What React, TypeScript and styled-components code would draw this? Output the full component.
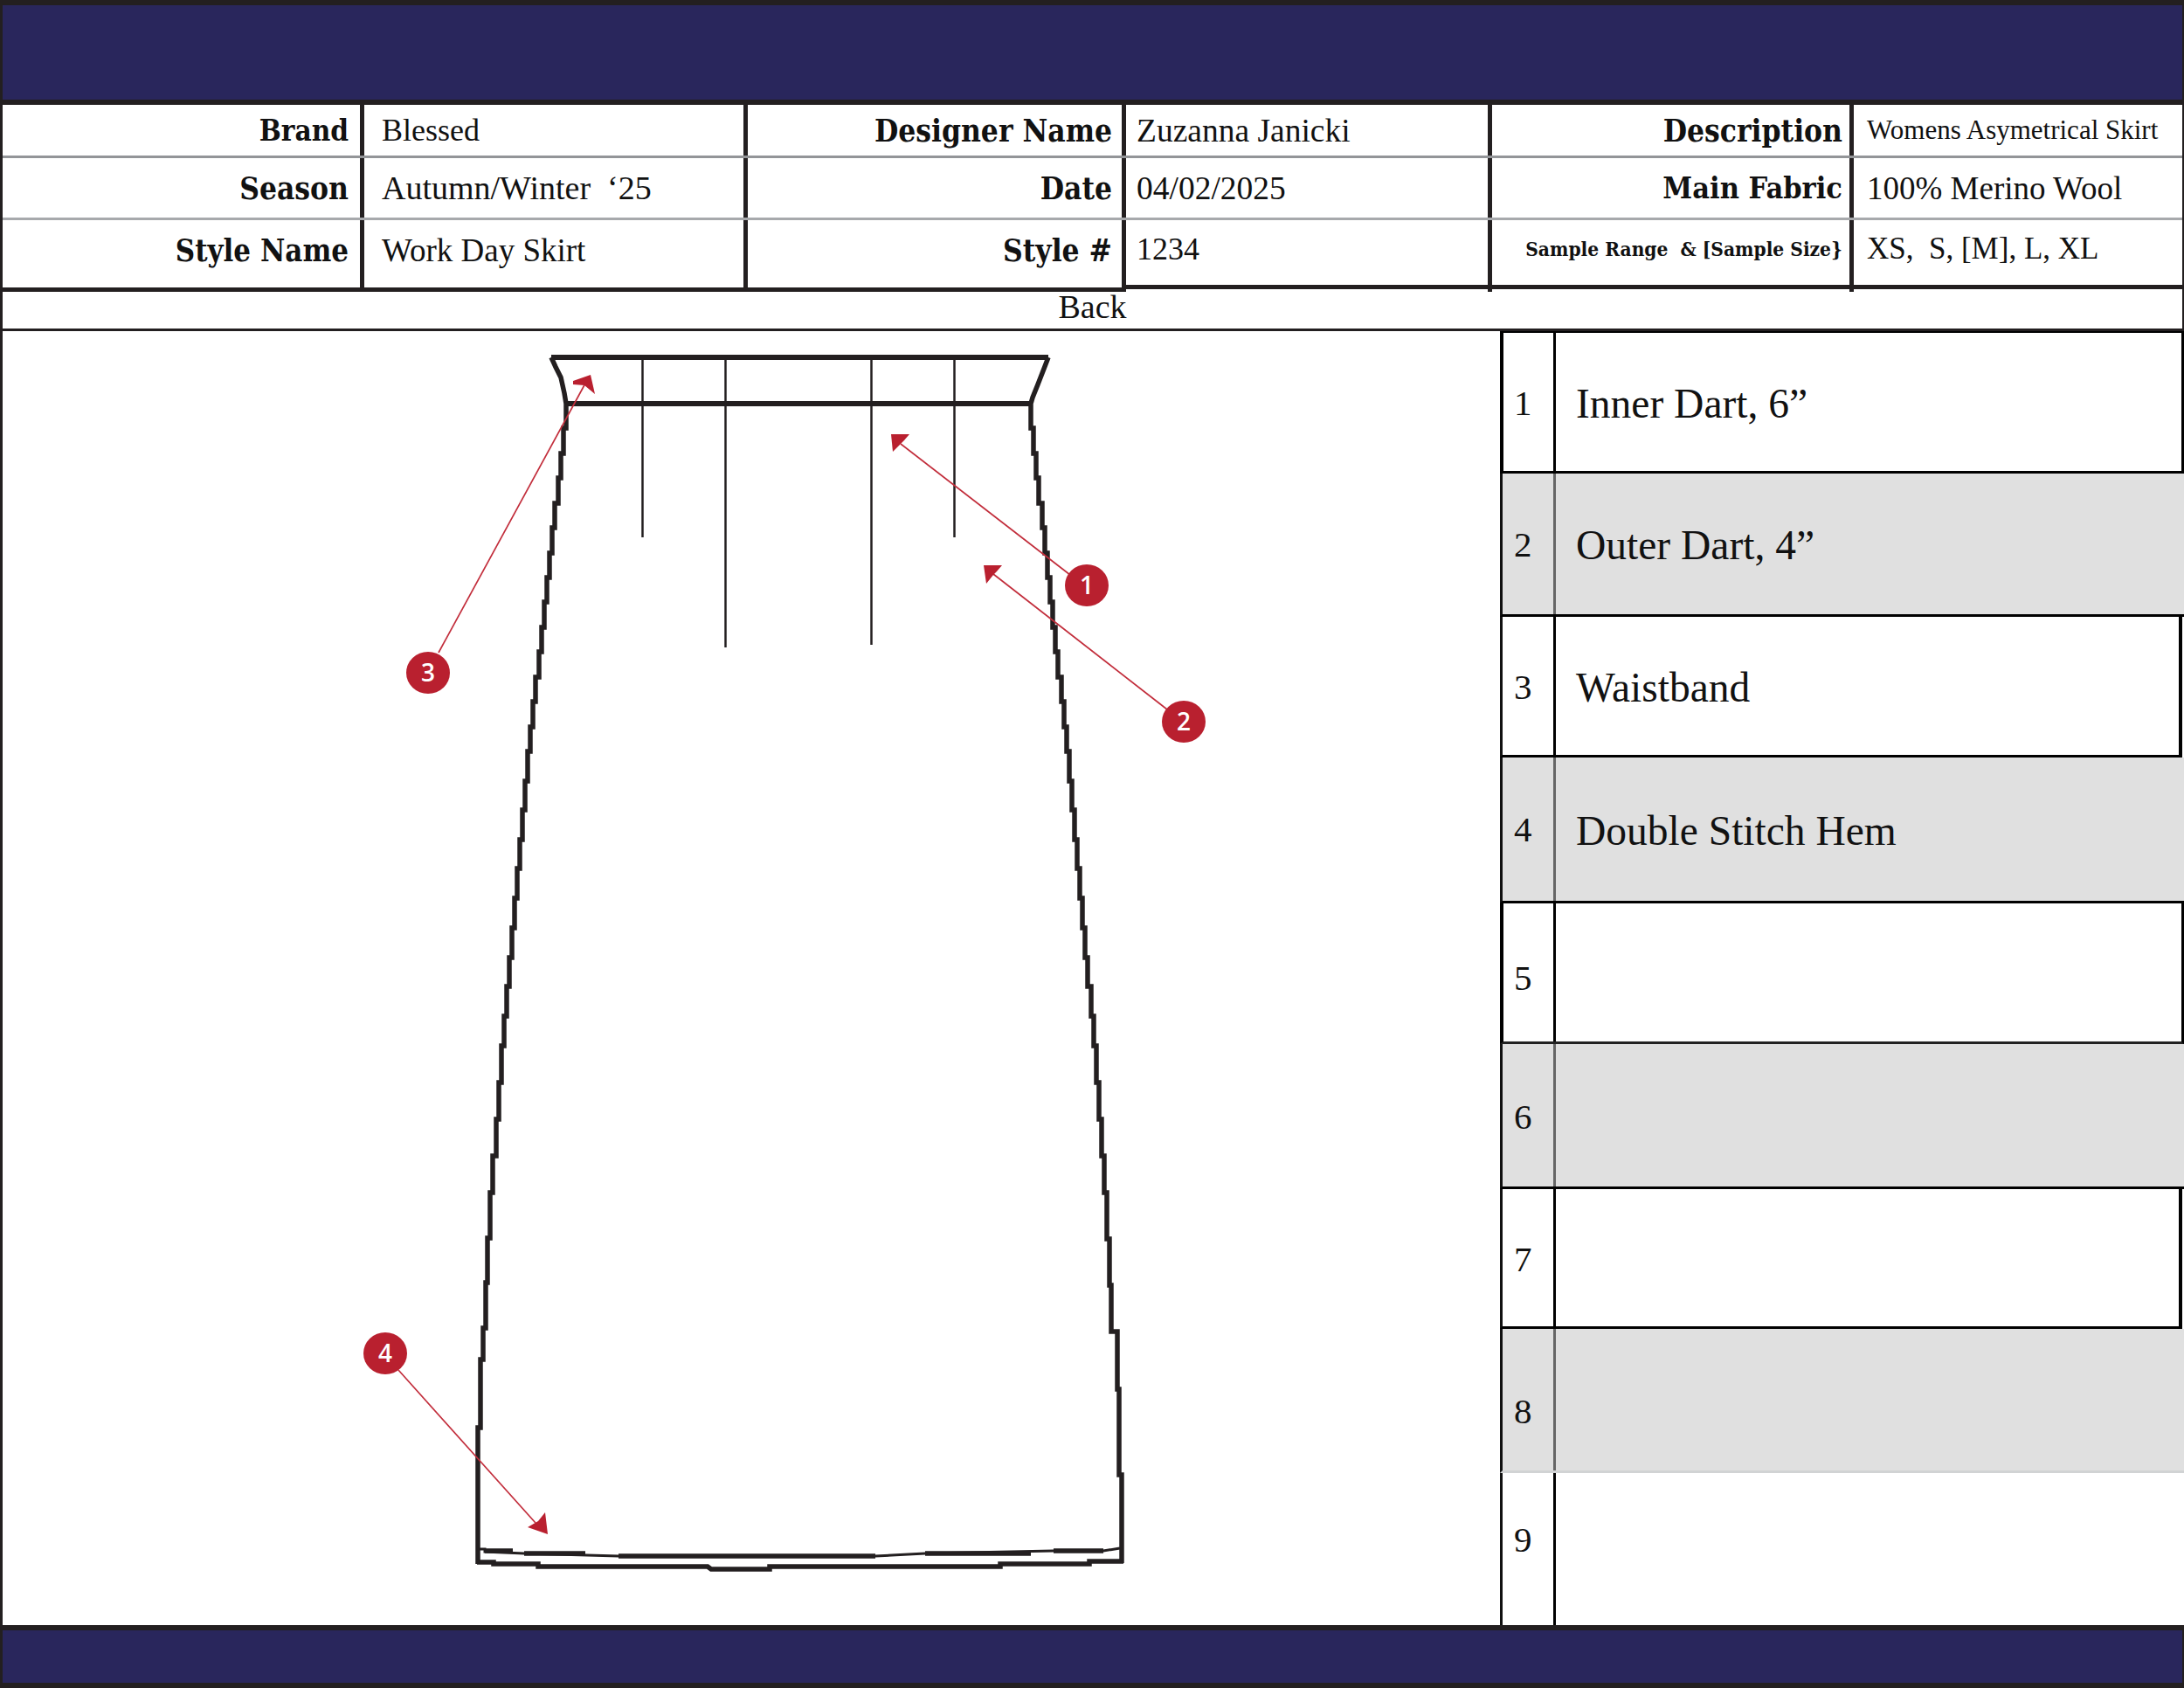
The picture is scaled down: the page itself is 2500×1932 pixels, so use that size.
import React from "react";
import styled, { createGlobalStyle } from "styled-components";

const GlobalStyle = createGlobalStyle`
    html, body {
        margin: 0;
        padding: 0;
        background: #fff;
    }
`;

const DARK = "#231f20";
const NAVY = "#29265c";
const RED = "#b9202f";

const Page = styled.div`
    width: 2500px;
    height: 1932px;
    display: flex;
    flex-direction: column;
    background: #fff;
    color: #111;
    font-family: "Liberation Serif", serif;
`;

const Band = styled.div<{ $h: number }>`
    box-sizing: border-box;
    height: ${p => p.$h}px;
    flex: none;
    background: ${NAVY};
    border: solid ${DARK};
    border-width: 6px 2px 6px 3px;
`;

const Info = styled.div`
    flex: none;
    border-left: 3px solid ${DARK};
    border-right: 2px solid ${DARK};
`;

const InfoRow = styled.div<{ $h: number; $line?: string }>`
    box-sizing: border-box;
    height: ${p => p.$h}px;
    display: grid;
    grid-template-columns: 414px 439px 433px 419px 414px 1fr;
    border-bottom: ${p => (p.$line ? `3px solid ${p.$line}` : "none")};
`;

const Cell = styled.div<{ $end?: boolean; $last?: boolean; $pad: number }>`
    box-sizing: border-box;
    position: relative;
    display: flex;
    align-items: center;
    white-space: pre;
    justify-content: ${p => (p.$end ? "flex-end" : "flex-start")};
    padding: ${p => (p.$end ? `0 ${p.$pad}px 0 0` : `0 0 0 ${p.$pad}px`)};
    border-right: ${p => (p.$last ? "none" : `5px solid ${DARK}`)};
`;

const BottomCell = styled(Cell)<{ $raised?: boolean }>`
    padding-bottom: 8px;
    border-bottom: 5px solid ${DARK};
    margin-bottom: ${p => (p.$raised ? "3px" : "0")};
    &::after {
        content: "";
        display: ${p => (p.$raised && !p.$last ? "block" : "none")};
        position: absolute;
        right: -5px;
        bottom: -8px;
        width: 5px;
        height: 8px;
        background: ${DARK};
    }
`;

const Label = styled.span<{ $size?: number }>`
    font-family: "DejaVu Serif Condensed", "DejaVu Serif", serif;
    font-stretch: condensed;
    font-weight: 700;
    font-size: ${p => p.$size ?? 34.5}px;
    color: #111;
`;

const Value = styled.span<{ $size?: number }>`
    font-size: ${p => p.$size ?? 37}px;
`;

const BackRow = styled.div`
    box-sizing: border-box;
    flex: none;
    height: 45px;
    display: flex;
    justify-content: center;
    font-size: 38px;
    line-height: 34px;
    border: solid ${DARK};
    border-width: 0 2px 3px 3px;
`;

const Main = styled.div`
    flex: 1;
    min-height: 0;
    display: flex;
`;

const Drawing = styled.div`
    box-sizing: border-box;
    width: 1717px;
    flex: none;
    border-left: 3px solid ${DARK};

    svg {
        display: block;
    }
`;

const Sheet = styled.div`
    flex: 1;
    display: grid;
    grid-template-rows: 161px 164px 161px 167px 161px 166px 160px 165px 1fr;
    border-top: 2px solid #000;
`;

const SheetRow = styled.div<{ $shade?: boolean; $strong?: boolean; $inset?: boolean; $end?: string }>`
    box-sizing: border-box;
    display: flex;
    background: ${p => (p.$shade ? "#e0e0e0" : "#fff")};
    border-bottom: ${p => (p.$end ? `3px solid ${p.$end}` : "none")};
    border-left: ${p => (p.$strong ? "4px solid #000" : "3px solid #111")};
    border-right: ${p => (p.$shade || !p.$end ? "none" : p.$inset ? "4px solid #000" : "3px solid #000")};
    margin-right: ${p => (p.$inset ? "2px" : "0")};
`;

const Num = styled.div<{ $shade?: boolean; $strong?: boolean; $shift: number }>`
    box-sizing: border-box;
    flex: none;
    width: ${p => (p.$strong ? 60 : 61)}px;
    display: flex;
    align-items: center;
    font-size: 41px;
    padding-left: ${p => (p.$strong ? 12 : 13)}px;
    padding-top: ${p => Math.max(p.$shift, 0) * 2}px;
    padding-bottom: ${p => Math.max(-p.$shift, 0) * 2}px;
    border-right: 3px solid ${p => (p.$shade ? "#666" : "#000")};
`;

const Note = styled.div`
    flex: 1;
    display: flex;
    align-items: center;
    padding: 3px 0 0 23px;
    font-size: 47.5px;
`;

const stairs = (knots: [number, number, number][]) => {
    const pts: string[] = [];
    for (let k = 1; k < knots.length; k++) {
        const [x0, y0] = knots[k - 1];
        const [x1, y1, n] = knots[k];
        for (let i = 0; i < n; i++) {
            const x = Math.round(x0 + ((x1 - x0) * i) / n);
            pts.push(`${x},${Math.round(y0 + ((y1 - y0) * i) / n)}`);
            pts.push(`${x},${Math.round(y0 + ((y1 - y0) * (i + 1)) / n)}`);
        }
    }
    return pts.join(" ");
};

const leftSide = `631,409 636,420 642,432 646,450 ${stairs([
    [648, 462, 0],
    [604, 860, 14],
    [589, 1028, 5],
    [574, 1197, 5],
    [561, 1365, 4],
    [553, 1520, 3],
])} 553,1520 553,1556 550,1556 550,1634 547,1634 547,1790`;

const rightSide = `1200,409 1195,422 1188,440 1182,455 ${stairs([
    [1180, 462, 0],
    [1224, 860, 14],
    [1239, 1028, 5],
    [1255, 1197, 5],
    [1267, 1365, 4],
    [1275, 1524, 3],
])} 1276,1524 1279,1524 1279,1590 1281,1590 1281,1688 1284,1688 1284,1789`;

const Badge = ({ cx, cy, n }: { cx: number; cy: number; n: number }) => (
    <g>
        <ellipse cx={cx} cy={cy} rx={25} ry={24} fill={RED} />
        <text x={cx} y={cy + 10} textAnchor="middle" fill="#fff" fontFamily="Open Sans, sans-serif" fontWeight={600} fontSize={28}>
            {n}
        </text>
    </g>
);

const Skirt = () => (
    <svg width="1714" height="1481" viewBox="3 379 1714 1481">
        <g fill="none" stroke={DARK}>
            <line x1="631" y1="409" x2="1200" y2="409" strokeWidth="6" />
            <line x1="647" y1="462" x2="1181" y2="462" strokeWidth="6" />
            <polyline points={leftSide} strokeWidth="5.5" />
            <polyline points={rightSide} strokeWidth="5.5" />
            <line x1="735.5" y1="412" x2="735.5" y2="615" strokeWidth="2.5" />
            <line x1="830.5" y1="412" x2="830.5" y2="741" strokeWidth="2.5" />
            <line x1="997.5" y1="412" x2="997.5" y2="738" strokeWidth="2.5" />
            <line x1="1092.5" y1="412" x2="1092.5" y2="615" strokeWidth="2.5" />
            <polyline points="549,1773 555,1773 555,1776 600,1778 708,1781 1002,1781 1059,1778 1206,1775 1263,1775 1282,1772" strokeWidth="3" />
            <path d="M555 1775H587M600 1778H670M708 1781H1002M1059 1778H1180M1206 1775H1263" strokeWidth="5.5" />
            <polyline points="546,1788 565,1788 565,1790 616,1790 616,1793 810,1793 814,1796 881,1796 881,1793 1145,1793 1145,1790 1247,1790 1247,1787 1286,1787" strokeWidth="5.5" />
        </g>
        <g stroke="#c22d3b" strokeWidth="1.7" fill="none">
            <line x1="1031" y1="508" x2="1225" y2="658" />
            <line x1="1137" y1="657" x2="1336" y2="812" />
            <line x1="671" y1="437" x2="502" y2="747" />
            <line x1="456" y1="1568" x2="613" y2="1743" />
        </g>
        <g fill={RED}>
            <polygon points="1020,497 1041,497 1035,504 1031,508 1022,517" />
            <polygon points="1126,647 1147,647 1141,654 1137,658 1129,668" />
            <polygon points="676,429 656,436 656,440 669,441 681,451" />
            <polygon points="627,1756 624,1731 616,1741 604,1748" />
        </g>
        <Badge cx={1244} cy={670} n={1} />
        <Badge cx={1355} cy={826} n={2} />
        <Badge cx={490} cy={770} n={3} />
        <Badge cx={441} cy={1549} n={4} />
    </svg>
);

const notes: { n: number; text: string; shift: number; strong?: boolean; shade?: boolean; inset?: boolean; end?: string }[] = [
    { n: 1, text: "Inner Dart, 6”", shift: 1, strong: true, end: "#000" },
    { n: 2, text: "Outer Dart, 4”", shift: 0, shade: true, end: "#000" },
    { n: 3, text: "Waistband", shift: 1, inset: true, end: "#000" },
    { n: 4, text: "Double Stitch Hem", shift: 0, shade: true, end: "#000" },
    { n: 5, text: "", shift: 6, strong: true, end: "#222" },
    { n: 6, text: "", shift: 1, shade: true, end: "#000" },
    { n: 7, text: "", shift: 1, inset: true, end: "#000" },
    { n: 8, text: "", shift: 13, shade: true, end: "#d1d3d4" },
    { n: 9, text: "", shift: -11 },
];

const App: React.FC = () => {
    return (
        <Page>
            <GlobalStyle />
            <Band $h={120} />
            <Info>
                <InfoRow $h={61} $line="#939598">
                    <Cell $end $pad={13}><Label $size={33}>Brand</Label></Cell>
                    <Cell $pad={20}><Value $size={36}>Blessed</Value></Cell>
                    <Cell $end $pad={11}><Label $size={35}>Designer Name</Label></Cell>
                    <Cell $pad={12}><Value $size={37.5}>Zuzanna Janicki</Value></Cell>
                    <Cell $end $pad={8}><Label $size={35}>Description</Label></Cell>
                    <Cell $last $pad={15}><Value $size={31}>Womens Asymetrical Skirt</Value></Cell>
                </InfoRow>
                <InfoRow $h={71} $line="#a7a9ac">
                    <Cell $end $pad={13}><Label $size={35}>Season</Label></Cell>
                    <Cell $pad={20}><Value $size={38}>{"Autumn/Winter  ‘25"}</Value></Cell>
                    <Cell $end $pad={11}><Label $size={35}>Date</Label></Cell>
                    <Cell $pad={12}><Value $size={37.5}>04/02/2025</Value></Cell>
                    <Cell $end $pad={8}><Label $size={34}>Main Fabric</Label></Cell>
                    <Cell $last $pad={15}><Value>100% Merino Wool</Value></Cell>
                </InfoRow>
                <InfoRow $h={82}>
                    <BottomCell $end $pad={13}><Label>Style Name</Label></BottomCell>
                    <BottomCell $pad={20}><Value>Work Day Skirt</Value></BottomCell>
                    <BottomCell $end $pad={11}><Label $size={35}>Style #</Label></BottomCell>
                    <BottomCell $raised $pad={12}><Value $size={36}>1234</Value></BottomCell>
                    <BottomCell $end $raised $pad={8}><Label $size={22.5}>{"Sample Range  & [Sample Size}"}</Label></BottomCell>
                    <BottomCell $last $raised $pad={15}><Value $size={35}>{"XS,  S, [M], L, XL"}</Value></BottomCell>
                </InfoRow>
            </Info>
            <BackRow>Back</BackRow>
            <Main>
                <Drawing>
                    <Skirt />
                </Drawing>
                <Sheet>
                    {notes.map(row => (
                        <SheetRow key={row.n} $shade={row.shade} $strong={row.strong} $inset={row.inset} $end={row.end}>
                            <Num $shade={row.shade} $strong={row.strong} $shift={row.shift}>{row.n}</Num>
                            <Note>{row.text}</Note>
                        </SheetRow>
                    ))}
                </Sheet>
            </Main>
            <Band $h={72} />
        </Page>
    );
};

export default App;
